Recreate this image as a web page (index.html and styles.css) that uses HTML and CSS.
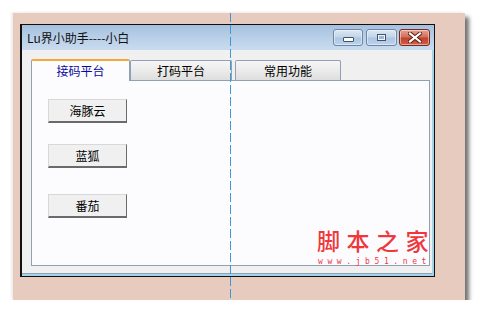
FILE: index.html
```html
<!DOCTYPE html>
<html lang="zh-CN">
<head>
    <meta charset="UTF-8">
    <title>Lu界小助手----小白</title>
    <link rel="stylesheet" href="styles.css">
</head>
<body>
    <div class="canvas">
        <div class="window">
            <div class="titlebar">
                <span class="title">Lu界小助手----小白</span>
                <div class="caption-buttons">
                    <div class="cap-btn cap-min"><span class="min-glyph"></span></div>
                    <div class="cap-btn cap-max"><span class="max-glyph"></span></div>
                    <div class="cap-btn cap-close">
                        <svg width="14" height="11" viewBox="0 0 14 11">
                            <path d="M2 1.5 L12 9.5 M12 1.5 L2 9.5" stroke="#5a1a10" stroke-width="4" stroke-linecap="square"/>
                            <path d="M2 1.5 L12 9.5 M12 1.5 L2 9.5" stroke="#ffffff" stroke-width="2.2" stroke-linecap="square"/>
                        </svg>
                    </div>
                </div>
            </div>
            <div class="client">
                <div class="tabs">
                    <div class="tab active">接码平台</div>
                    <div class="tab">打码平台</div>
                    <div class="tab tab-wide">常用功能</div>
                </div>
                <div class="panel">
                    <button class="btn btn-first">海豚云</button>
                    <button class="btn btn-second">蓝狐</button>
                    <button class="btn btn-third">番茄</button>
                </div>
            </div>
        </div>
        <div class="guide"></div>
        <div class="watermark">
            <div class="wm-title">脚本之家</div>
            <div class="wm-url">www.jb51.net</div>
        </div>
    </div>
</body>
</html>
```

FILE: styles.css
```css
body {
    margin: 0;
    background: #ffffff;
    font-family: "Noto Sans CJK SC", "Liberation Sans", sans-serif;
    font-size: 12px;
    color: #000;
}
.canvas {
    position: relative;
    width: 445px;
    height: 276px;
    margin: 13px 0 0 13px;
    padding: 11px 0 0 7px;
    background: #e8cbbf;
    box-shadow: 4px 4px 4px rgba(0, 0, 0, 0.55), -2px -1px 2px rgba(0, 0, 0, 0.07);
}
.window {
    width: 412px;
    height: 251px;
    border: 1px solid #111;
    border-left-width: 2px;
    background: #a4d2ea;
    display: flex;
    flex-direction: column;
}
.titlebar {
    height: 25px;
    display: flex;
    align-items: flex-start;
    justify-content: space-between;
    background: linear-gradient(#a6c0dd, #bcd2ea 60%, #c9dbee);
}
.title {
    margin: 5px 0 0 5px;
    line-height: 16px;
    color: #111;
}
.caption-buttons {
    display: flex;
    margin: 4px 4px 0 0;
}
.cap-btn {
    height: 15px;
    border: 1px solid #6d86a4;
    border-radius: 3px;
    background: linear-gradient(#dbe7f4, #c2d5ea 48%, #adc5e0 52%, #bcd3ec);
    box-shadow: inset 0 0 0 1px rgba(255, 255, 255, 0.45);
    display: flex;
    align-items: center;
    justify-content: center;
}
.cap-min {
    width: 28px;
    margin-right: 3px;
}
.cap-max {
    width: 29px;
    margin-right: 2px;
}
.cap-close {
    width: 29px;
    border-color: #7a2a1c;
    background: linear-gradient(#e6a193, #d4705c 45%, #c2422a 55%, #d0604a);
}
.min-glyph {
    width: 9px;
    height: 3px;
    margin-top: 4px;
    background: #fff;
    border: 1px solid #3d536e;
    border-radius: 1px;
}
.max-glyph {
    width: 7px;
    height: 5px;
    border: 1px solid #3d536e;
    outline: 1px solid #f2f6fb;
    outline-offset: -2px;
    background: #9fb6d2;
}
.client {
    flex: 1;
    background: #f0f0f0;
    margin: 0 2px 2px 0;
    padding: 8px 2px 0 9px;
    border-bottom: 1px solid #8fa3b6;
    box-sizing: border-box;
    display: flex;
    flex-direction: column;
}
.tabs {
    display: flex;
    align-items: flex-end;
    height: 22px;
}
.tab {
    width: 100px;
    height: 19px;
    border: 1px solid #8fa1b3;
    border-bottom: none;
    border-radius: 2px 2px 0 0;
    background: linear-gradient(#f6f6f6, #ebebeb 50%, #dedede);
    text-align: center;
    line-height: 19px;
}
.tab.active {
    width: 97px;
    height: 20px;
    border-top: 2px solid #f2a83a;
    background: #fcfcfe;
    color: #0a0a9a;
    position: relative;
    z-index: 1;
    margin-bottom: -1px;
    line-height: 20px;
}
.tab-wide {
    width: 104px;
    margin-left: 3px;
}
.panel {
    box-sizing: border-box;
    width: 399px;
    height: 186px;
    border: 1px solid #8fa1b3;
    background: #fcfcfe;
    display: flex;
    flex-direction: column;
    align-items: flex-start;
    padding-left: 16px;
}
.btn {
    width: 79px;
    height: 24px;
    padding: 0;
    background: #f0f0f0;
    border: 1px solid #d8d8d8;
    border-right-color: #6a6a6a;
    border-bottom: 2px solid #6a6a6a;
    font-family: "Noto Sans CJK SC", sans-serif;
    font-size: 12px;
    color: #000;
}
.btn-first {
    margin-top: 18px;
}
.btn-second {
    margin-top: 21px;
}
.btn-third {
    margin-top: 26px;
}
.guide {
    position: absolute;
    left: 217px;
    top: 0;
    width: 1px;
    height: 287px;
    background: repeating-linear-gradient(#3d98d6 0, #3d98d6 9px, transparent 9px, transparent 12px);
}
.watermark {
    position: absolute;
    left: 304px;
    top: 215px;
    white-space: nowrap;
    color: #f0383c;
}
.wm-title {
    font-size: 23px;
    line-height: 25px;
    letter-spacing: 6.5px;
    font-weight: 500;
}
.wm-url {
    font-family: "DejaVu Sans Mono", monospace;
    font-size: 8px;
    line-height: 9px;
    letter-spacing: 4.6px;
    margin: 4px 0 0 1px;
}
```
